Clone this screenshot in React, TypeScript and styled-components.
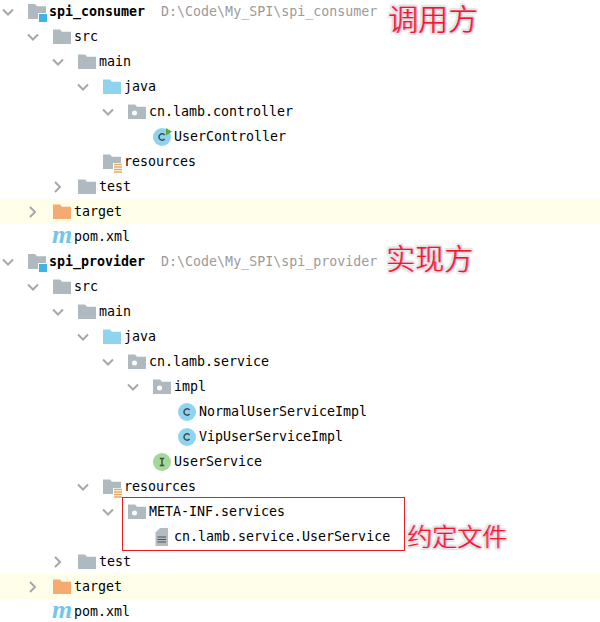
import React from 'react';
import styled, { createGlobalStyle } from 'styled-components';

const GlobalStyle = createGlobalStyle`
  html, body {
    margin: 0;
    padding: 0;
    background: #fff;
  }
`;

const Page = styled.div`
  position: relative;
  width: 600px;
  height: 622px;
  overflow: hidden;
  font-family: 'DejaVu Sans Mono', 'Liberation Mono', monospace;
  font-size: 13.3px;
  color: #000;
`;

const Tree = styled.div`
  display: flex;
  flex-direction: column;
  margin-top: -1px;
`;

const Row = styled.div<{ $depth: number; $excluded?: boolean }>`
  display: flex;
  align-items: center;
  height: 25px;
  padding-left: ${p => 1 + p.$depth * 25}px;
  background: ${p => (p.$excluded ? '#ffffe9' : 'transparent')};
`;

const Toggle = styled.span`
  display: flex;
  flex: none;
  align-items: center;
  width: 27px;
  height: 25px;
`;

const IconSlot = styled.span`
  display: flex;
  flex: none;
  align-items: center;
  justify-content: center;
  width: 18px;
  height: 18px;
  margin-right: 3px;
`;

const IconSvg = styled.svg`
  display: block;
  flex: none;
  overflow: visible;
`;

const Label = styled.span<{ $root?: boolean }>`
  font-weight: ${p => (p.$root ? 700 : 400)};
  white-space: pre;
`;

const Hint = styled.span`
  margin-left: 16px;
  color: #9b9b9b;
  white-space: pre;
`;

const MavenGlyph = styled.span`
  font-family: 'Liberation Serif', serif;
  font-size: 26px;
  font-weight: 700;
  font-style: italic;
  line-height: 18px;
  color: #72c6ea;
  transform: translateY(-2px);
`;

const Note = styled.div<{ $left: number; $top: number; $size: number }>`
  position: absolute;
  left: ${p => p.$left}px;
  top: ${p => p.$top}px;
  font-family: 'Noto Sans CJK SC', sans-serif;
  font-size: ${p => p.$size}px;
  font-weight: 300;
  line-height: 1.3;
  color: #f5142a;
  white-space: nowrap;
  text-shadow:
    1px 0 0 #ee66aa,
    2px 0 1px #e4e4e4,
    -2px 0 1px #e4e4e4,
    0 2px 1px #e4e4e4,
    0 -2px 1px #e4e4e4,
    2px 2px 1px #e4e4e4,
    -2px -2px 1px #e4e4e4,
    2px -2px 1px #e4e4e4,
    -2px 2px 1px #e4e4e4;
`;

const Callout = styled.div`
  position: absolute;
  left: 122px;
  top: 497px;
  width: 281px;
  height: 52px;
  border: 1px solid #ed1c24;
`;

type IconKind =
  | 'module'
  | 'folder'
  | 'source'
  | 'package'
  | 'resources'
  | 'excluded'
  | 'class'
  | 'runnable'
  | 'interface'
  | 'maven'
  | 'file';

const FOLDER = 'M0 1.5h7l2 2.2h9V16H0z';

const Icon = ({ kind }: { kind: IconKind }) => {
  if (kind === 'maven') return <MavenGlyph>m</MavenGlyph>;
  return (
    <IconSvg width="18" height="18" viewBox="0 0 18 18">
      {kind === 'folder' && <path d={FOLDER} fill="#aeb9c0" />}
      {kind === 'source' && <path d={FOLDER} fill="#8fd4ef" />}
      {kind === 'excluded' && <path d={FOLDER} fill="#f6a971" />}
      {kind === 'module' && (
        <>
          <path d="M0 1h7l2 2.2h9V10H10v6H0z" fill="#aeb9c0" />
          <rect x="11" y="11" width="8" height="8" fill="#3fb4e4" />
        </>
      )}
      {kind === 'package' && (
        <>
          <path d={FOLDER} fill="#aeb9c0" />
          <circle cx="6.5" cy="10" r="2.5" fill="#fff" />
        </>
      )}
      {kind === 'resources' && (
        <>
          <path d="M0 1.5h7l2 2.2h9V10h-8v6H0z" fill="#aeb9c0" />
          <path d="M11 11.5h8M11 14h8M11 16.5h8M11 19h8" stroke="#e3a960" strokeWidth="1.5" />
        </>
      )}
      {(kind === 'class' || kind === 'runnable') && (
        <>
          <circle cx="9" cy="9" r="9" fill="#8fd4ef" />
          <path d="M11.6 6.9a3.2 3.2 0 1 0 0 4.2" fill="none" stroke="#3f4a52" strokeWidth="1.5" />
        </>
      )}
      {kind === 'runnable' && <path d="M13 0l6 3.7-6 3.8z" fill="#59a83a" />}
      {kind === 'interface' && (
        <>
          <circle cx="9" cy="9" r="9" fill="#a4d79b" />
          <path d="M6.8 5.5h4.4M6.8 12.5h4.4M9 5.5v7" fill="none" stroke="#3f4a42" strokeWidth="1.4" />
        </>
      )}
      {kind === 'file' && (
        <>
          <path d="M7 0h8v18H2.500V4.500z" fill="#b2bcc2" />
          <path d="M4.500 9h8.500M4.500 11.500h8.500M4.500 14h8.500" stroke="#4b5358" strokeWidth="1" />
        </>
      )}
    </IconSvg>
  );
};

const Chevron = ({ open }: { open: boolean }) => (
  <IconSvg width="14" height="14" viewBox="0 0 14 14">
    <path
      d={open ? 'M2 4.500l5 5 5-5' : 'M4 2l5 5-5 5'}
      fill="none"
      stroke="#a3a8ab"
      strokeWidth="2"
    />
  </IconSvg>
);

type Node = {
  depth: number;
  name: string;
  icon: IconKind;
  toggle?: 'open' | 'closed';
  root?: boolean;
  hint?: string;
  excluded?: boolean;
};

const nodes: Node[] = [
  { depth: 0, name: 'spi_consumer', icon: 'module', toggle: 'open', root: true, hint: 'D:\\Code\\My_SPI\\spi_consumer' },
  { depth: 1, name: 'src', icon: 'folder', toggle: 'open' },
  { depth: 2, name: 'main', icon: 'folder', toggle: 'open' },
  { depth: 3, name: 'java', icon: 'source', toggle: 'open' },
  { depth: 4, name: 'cn.lamb.controller', icon: 'package', toggle: 'open' },
  { depth: 5, name: 'UserController', icon: 'runnable' },
  { depth: 3, name: 'resources', icon: 'resources' },
  { depth: 2, name: 'test', icon: 'folder', toggle: 'closed' },
  { depth: 1, name: 'target', icon: 'excluded', toggle: 'closed', excluded: true },
  { depth: 1, name: 'pom.xml', icon: 'maven' },
  { depth: 0, name: 'spi_provider', icon: 'module', toggle: 'open', root: true, hint: 'D:\\Code\\My_SPI\\spi_provider' },
  { depth: 1, name: 'src', icon: 'folder', toggle: 'open' },
  { depth: 2, name: 'main', icon: 'folder', toggle: 'open' },
  { depth: 3, name: 'java', icon: 'source', toggle: 'open' },
  { depth: 4, name: 'cn.lamb.service', icon: 'package', toggle: 'open' },
  { depth: 5, name: 'impl', icon: 'package', toggle: 'open' },
  { depth: 6, name: 'NormalUserServiceImpl', icon: 'class' },
  { depth: 6, name: 'VipUserServiceImpl', icon: 'class' },
  { depth: 5, name: 'UserService', icon: 'interface' },
  { depth: 3, name: 'resources', icon: 'resources', toggle: 'open' },
  { depth: 4, name: 'META-INF.services', icon: 'package', toggle: 'open' },
  { depth: 5, name: 'cn.lamb.service.UserService', icon: 'file' },
  { depth: 2, name: 'test', icon: 'folder', toggle: 'closed' },
  { depth: 1, name: 'target', icon: 'excluded', toggle: 'closed', excluded: true },
  { depth: 1, name: 'pom.xml', icon: 'maven' },
];

const App = () => (
  <Page>
    <GlobalStyle />
    <Tree>
      {nodes.map((node, i) => (
        <Row key={i} $depth={node.depth} $excluded={node.excluded}>
          <Toggle>{node.toggle && <Chevron open={node.toggle === 'open'} />}</Toggle>
          <IconSlot>
            <Icon kind={node.icon} />
          </IconSlot>
          <Label $root={node.root}>{node.name}</Label>
          {node.hint && <Hint>{node.hint}</Hint>}
        </Row>
      ))}
    </Tree>
    <Callout />
    <Note $left={388} $top={-2} $size={30}>调用方</Note>
    <Note $left={386} $top={239} $size={29}>实现方</Note>
    <Note $left={407} $top={519} $size={25}>约定文件</Note>
  </Page>
);

export default App;
